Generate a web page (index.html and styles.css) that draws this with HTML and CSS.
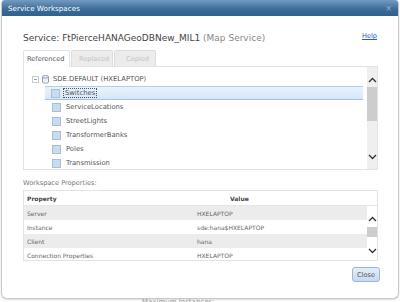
FILE: index.html
```html
<!DOCTYPE html>
<html lang="en">
<head>
	<meta charset="UTF-8">
	<title>Service Workspaces</title>
	<link rel="stylesheet" href="styles.css">
</head>
<body>
	<div class="dialog">
		<div class="titlebar">
			<span class="title">Service Workspaces</span>
			<span class="x">&#215;</span>
		</div>
		<div class="content">
			<div class="heading">
				<span class="service">Service: FtPierceHANAGeoDBNew_MIL1 <span class="type">(Map Service)</span></span>
				<a class="help" href="#">Help</a>
			</div>
			<div class="tabs">
				<div class="tab active">Referenced</div>
				<div class="tab">Replaced</div>
				<div class="tab">Copied</div>
			</div>
			<div class="panel tree">
				<div class="list">
					<div class="row root">
						<span class="minus"></span>
						<svg class="db" width="7" height="9" viewBox="0 0 7 9">
							<path d="M0.5 1.8 V7.2 C0.5 8.4 6.5 8.4 6.5 7.2 V1.8" fill="#eef2f7" stroke="#8e9fb3"/>
							<ellipse cx="3.5" cy="1.8" rx="3" ry="1.3" fill="#eef2f7" stroke="#8e9fb3"/>
						</svg>
						<span>SDE.DEFAULT (HXELAPTOP)</span>
					</div>
					<div class="row leaf selected"><span class="check"></span><span class="name focus">Switches</span></div>
					<div class="row leaf"><span class="check"></span><span class="name">ServiceLocations</span></div>
					<div class="row leaf"><span class="check"></span><span class="name">StreetLights</span></div>
					<div class="row leaf"><span class="check"></span><span class="name">TransformerBanks</span></div>
					<div class="row leaf"><span class="check"></span><span class="name">Poles</span></div>
					<div class="row leaf"><span class="check"></span><span class="name">Transmission</span></div>
				</div>
				<div class="scroll big">
					<svg class="arrow" width="9" height="6" viewBox="0 0 9 6"><polyline points="1,5 4.5,1.5 8,5" fill="none" stroke="#333" stroke-width="1.3"/></svg>
					<div class="thumb"></div>
					<div class="track"></div>
					<svg class="arrow" width="9" height="6" viewBox="0 0 9 6"><polyline points="1,1 4.5,4.5 8,1" fill="none" stroke="#333" stroke-width="1.3"/></svg>
				</div>
			</div>
			<div class="label">Workspace Properties:</div>
			<div class="panel props">
				<div class="head">
					<span class="prop">Property</span>
					<span class="val">Value</span>
				</div>
				<div class="body">
					<div class="rows">
						<div class="prow grey"><span class="prop">Server</span><span>HXELAPTOP</span></div>
						<div class="prow"><span class="prop">Instance</span><span>sde:hana$HXELAPTOP</span></div>
						<div class="prow grey"><span class="prop">Client</span><span>hana</span></div>
						<div class="prow"><span class="prop">Connection Properties</span><span>HXELAPTOP</span></div>
					</div>
					<div class="scroll small">
						<svg class="arrow" width="9" height="6" viewBox="0 0 9 6"><polyline points="1,5 4.5,1.5 8,5" fill="none" stroke="#333" stroke-width="1.3"/></svg>
						<div class="thumb"></div>
						<div class="track"></div>
						<svg class="arrow" width="9" height="6" viewBox="0 0 9 6"><polyline points="1,1 4.5,4.5 8,1" fill="none" stroke="#333" stroke-width="1.3"/></svg>
					</div>
				</div>
			</div>
			<div class="footer">
				<button class="close">Close</button>
			</div>
		</div>
	</div>
	<div class="behind">Maximum Instances:</div>
</body>
</html>
```
FILE: styles.css
```css
body{
	margin:0;
	height:302px;
	overflow:hidden;
	background:#fff;
	font-family:"DejaVu Sans", Verdana, sans-serif;
	color:#444;
}
.dialog{
	margin:0 1px;
	height:299px;
	border:1px solid #c9c9c9;
	border-top:0;
	border-radius:4px 4px 6px 6px;
	box-sizing:border-box;
	background:#fff;
	box-shadow:0 1px 2px rgba(0,0,0,0.15);
}
.titlebar{
	height:16px;
	background:linear-gradient(#739bc2, #3a6a97 60%, #30608c);
	border-radius:3px 3px 0 0;
	display:flex;
	align-items:center;
	justify-content:space-between;
	padding:0 6px 0 6px;
}
.title{
	color:#fff;
	font-size:7.2px;
}
.x{
	color:#9bb3cc;
	font-size:8px;
}
.content{
	padding:0 20px 0 21px;
}
.heading{
	display:flex;
	justify-content:space-between;
	align-items:flex-start;
	height:34px;
	padding-top:15px;
	box-sizing:border-box;
}
.service{
	font-size:9px;
	color:#444;
	margin-top:2px;
}
.type{
	color:#888;
}
.help{
	font-size:6.6px;
	color:#2a5db0;
	margin-right:1px;
	margin-top:1px;
}
.tabs{
	display:flex;
	height:16px;
	gap:1px;
}
.tab{
	font-size:6.6px;
	color:#c3c3c3;
	background:#ececec;
	border:1px solid #dcdcdc;
	border-bottom:0;
	border-radius:2px 2px 0 0;
	padding:0 0 0 7px;
	width:42px;
	display:flex;
	align-items:center;
	justify-content:flex-start;
	box-sizing:border-box;
}
.tab.active{
	background:#fff;
	color:#555;
	width:47px;
	padding-left:3px;
	margin-bottom:-1px;
	position:relative;
	border-color:#dde3ea;
}
.tab:nth-child(3){
	padding-left:11px;
}
.panel{
	border:1px solid #dfe3e8;
	background:#fff;
}
.tree{
	height:104px;
	box-sizing:border-box;
	display:flex;
}
.list{
	flex:1;
	padding-top:5px;
}
.row{
	height:14px;
	display:flex;
	align-items:center;
	font-size:6.8px;
	color:#555;
}
.root{
	padding-left:8px;
}
.minus{
	width:5px;
	height:5px;
	border:1px solid #c8ccd2;
	position:relative;
	margin-right:3px;
}
.minus:before{
	content:'';
	position:absolute;
	left:1px;
	top:2px;
	width:3px;
	height:1px;
	background:#9aa3ad;
}
.db{
	margin-right:4px;
}
.leaf{
	padding-left:28px;
}
.selected{
	background:linear-gradient(#e9f2fd, #d6e7fb);
	border-top:1px solid #b6cde6;
	border-bottom:1px solid #a9c3df;
	height:12px;
	margin-left:21px;
	padding-left:6px;
	margin-right:4px;
}
.check{
	width:7px;
	height:7px;
	background:#c9dbef;
	border:1px solid #a9bfd8;
	margin-right:3px;
}
.name{
	padding:0 1px;
	border:1px solid transparent;
}
.focus{
	border:1px dotted #555;
}
.scroll{
	width:10px;
	background:#efefef;
	display:flex;
	flex-direction:column;
	align-items:center;
}
.scroll .arrow{
	flex:none;
}
.big .arrow:first-child{
	margin:10px 0 4px;
}
.big .thumb{
	width:10px;
	height:34px;
	background:#cdcdcd;
}
.track{
	flex:1;
}
.big .arrow:last-child{
	margin-bottom:9px;
}
.label{
	font-size:6.6px;
	color:#777;
	height:20px;
	padding-top:9px;
	box-sizing:border-box;
}
.props{
	height:71px;
	box-sizing:border-box;
	font-size:6px;
	color:#666;
}
.head{
	height:15px;
	display:flex;
	align-items:center;
	font-weight:bold;
	color:#444;
	border-bottom:1px solid #e6e6e6;
	box-sizing:border-box;
}
.head .prop{
	width:173px;
	padding-left:3px;
	box-sizing:border-box;
}
.head .val{
	padding-left:33px;
}
.body{
	display:flex;
}
.rows{
	flex:1;
}
.prow{
	height:14px;
	display:flex;
	align-items:center;
}
.prow .prop{
	width:173px;
	padding-left:3px;
	box-sizing:border-box;
}
.grey{
	background:#ececec;
}
.small{
	height:54px;
	background:#fff;
}
.small .arrow:first-child{
	margin:10px 0 5px;
}
.small .thumb{
	width:10px;
	height:10px;
	background:#cdcdcd;
}
.small .arrow:last-child{
	margin-bottom:6px;
}
.footer{
	display:flex;
	justify-content:flex-end;
	padding-top:6px;
}
.close{
	width:28px;
	height:15px;
	margin-right:-2px;
	padding:0;
	font-family:"DejaVu Sans", Verdana, sans-serif;
	font-size:6.6px;
	color:#555;
	background:linear-gradient(#e4eefa, #c6daf1);
	border:1px solid #9bb7d7;
	border-radius:3px;
}
.behind{
	margin:0 0 0 142px;
	font-size:7px;
	color:#999;
	line-height:6px;
}
```
